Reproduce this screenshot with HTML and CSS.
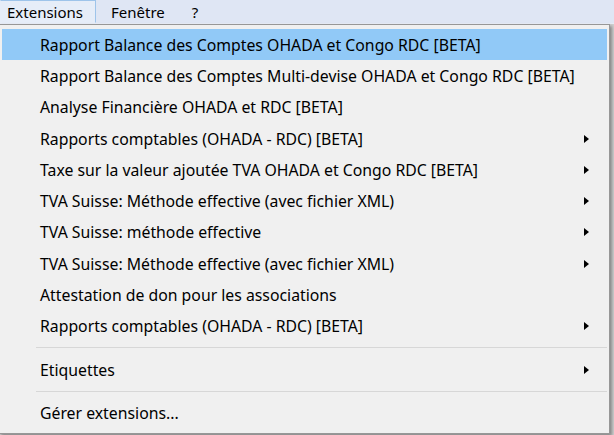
FILE: index.html
```html
<!DOCTYPE html>
<html lang="fr">
<head>
<meta charset="utf-8">
<title>Extensions</title>
<link rel="stylesheet" href="styles.css">
</head>
<body>
<div class="menubar">
  <div class="mb-item active">Extensions</div>
  <div class="mb-item">Fenêtre</div>
  <div class="mb-item">?</div>
</div>
<div class="app"></div>
<div class="dropdown">
  <div class="row hl"><span class="label">Rapport Balance des Comptes OHADA et Congo RDC [BETA]</span></div>
  <div class="row"><span class="label">Rapport Balance des Comptes Multi-devise OHADA et Congo RDC [BETA]</span></div>
  <div class="row"><span class="label">Analyse Financière OHADA et RDC [BETA]</span></div>
  <div class="row sub"><span class="label">Rapports comptables (OHADA - RDC) [BETA]</span><span class="arrow"></span></div>
  <div class="row sub"><span class="label">Taxe sur la valeur ajoutée TVA OHADA et Congo RDC [BETA]</span><span class="arrow"></span></div>
  <div class="row sub"><span class="label">TVA Suisse: Méthode effective (avec fichier XML)</span><span class="arrow"></span></div>
  <div class="row sub"><span class="label">TVA Suisse: méthode effective</span><span class="arrow"></span></div>
  <div class="row sub"><span class="label">TVA Suisse: Méthode effective (avec fichier XML)</span><span class="arrow"></span></div>
  <div class="row"><span class="label">Attestation de don pour les associations</span></div>
  <div class="row sub"><span class="label">Rapports comptables (OHADA - RDC) [BETA]</span><span class="arrow"></span></div>
  <div class="sep"></div>
  <div class="row sub"><span class="label">Etiquettes</span><span class="arrow"></span></div>
  <div class="sep"></div>
  <div class="row"><span class="label">Gérer extensions...</span></div>
</div>
</body>
</html>
```
FILE: styles.css
```css
html, body {
  margin: 0;
  padding: 0;
}
body {
  width: 614px;
  height: 435px;
  overflow: hidden;
  background: #f0f0f0;
  font-family: "Noto Sans", "Open Sans", sans-serif;
  color: #000;
  position: relative;
}
.menubar {
  height: 23px;
  background: #dfe6f4;
  display: flex;
  align-items: stretch;
  border-bottom: 1px solid #e8edf7;
}
.mb-item {
  font-size: 15px;
  line-height: 22px;
  padding: 0 14px 0 6px;
  margin-right: 8px;
  border: 1px solid transparent;
}
.mb-item:first-child { padding-right: 12px; margin-right: 0; }
.mb-item:nth-child(2) { padding-left: 14px; margin-right: 5px; }
.mb-item.active {
  background: #e6edf8;
  border-color: #9ec4ea;
  border-bottom-color: transparent;
  border-left-color: transparent;
}
.app {
  height: 411px;
  background: #d0d0d0;
}
.dropdown {
  position: absolute;
  top: 24px;
  left: -1px;
  width: 605px;
  height: 404px;
  background: #f0f0f0;
  border: 1px solid #979797;
  box-shadow: 2px 2px 3px rgba(0,0,0,0.35);
  padding: 4px 2px 0 2px;
  box-sizing: content-box;
}
.row {
  height: 31.3px;
  display: flex;
  align-items: center;
  justify-content: space-between;
  font-size: 15.8px;
  padding-left: 38px;
  padding-right: 18px;
  white-space: nowrap;
}
.row.hl {
  background: #91c9f7;
}
.arrow {
  width: 0;
  height: 0;
  border-top: 4.5px solid transparent;
  border-bottom: 4.5px solid transparent;
  border-left: 5px solid #000;
}
.sep {
  height: 12px;
  display: flex;
  align-items: center;
  padding-left: 34px;
}
.sep::before {
  content: "";
  display: block;
  flex: 1;
  height: 1px;
  background: #d7d7d7;
}
```
